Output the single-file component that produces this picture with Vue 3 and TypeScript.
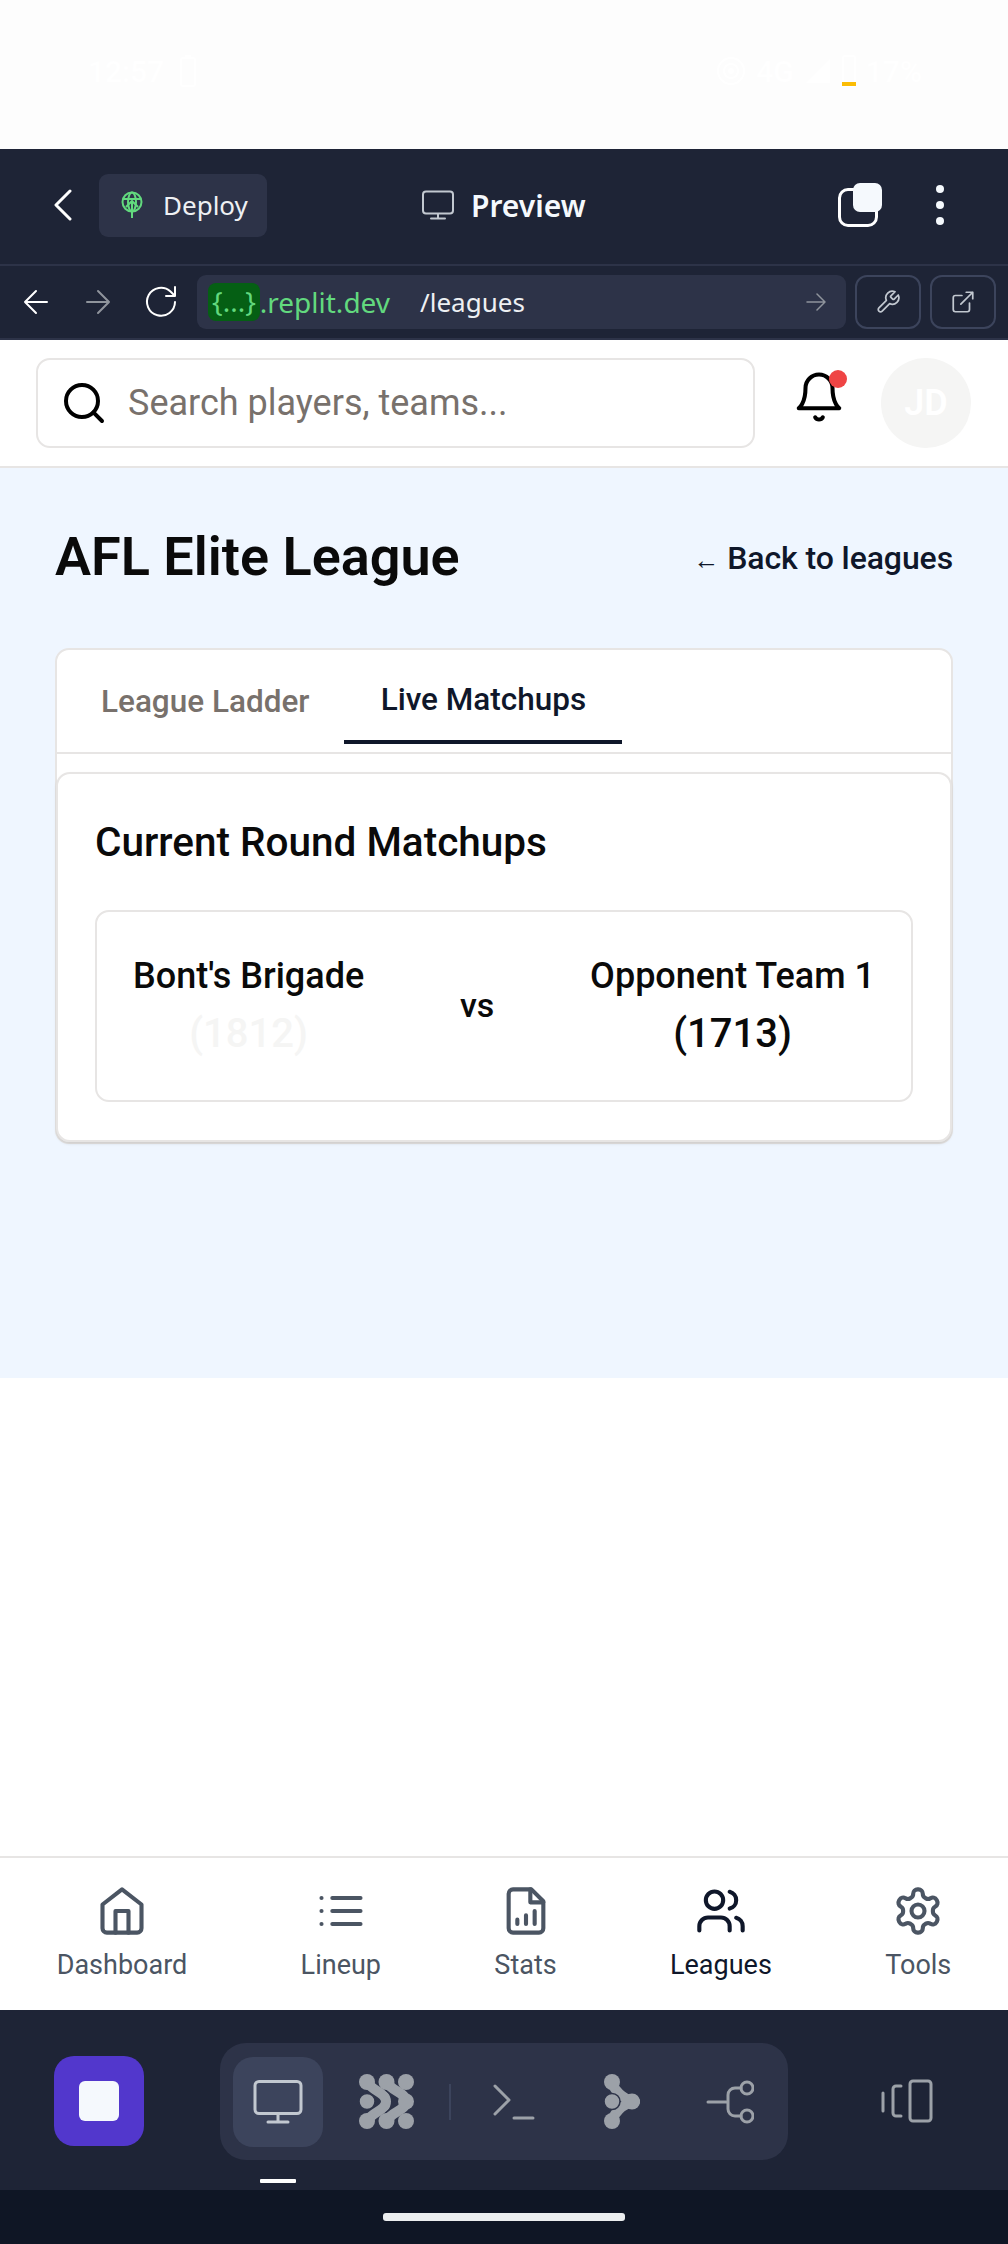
<script setup lang="ts">
interface NavItem {
  label: string;
  active?: boolean;
}

const navItems: NavItem[] = [
  { label: 'Dashboard' },
  { label: 'Lineup' },
  { label: 'Stats' },
  { label: 'Leagues', active: true },
  { label: 'Tools' },
]
</script>

<template>
  <div class="app">
    <!-- phone status bar, white on white -->
    <div class="status">
      <div class="status__group">
        <span class="status__text">12:57</span>
        <svg class="status__batt" viewBox="0 0 16 32" width="16" height="32"><rect x="1" y="3" width="14" height="28" rx="2" fill="none" stroke="#fff" stroke-width="2" /><rect x="5" y="0" width="6" height="3" fill="#fff" /></svg>
      </div>
      <div class="status__group status__group--right">
        <svg viewBox="0 0 30 30" width="30" height="30" fill="none" stroke="#fff" stroke-width="2"><circle cx="15" cy="15" r="13" /><circle cx="15" cy="15" r="7" /><circle cx="15" cy="15" r="2" fill="#fff" /></svg>
        <span class="status__text">4G</span>
        <svg viewBox="0 0 28 28" width="28" height="28"><path d="M26 2v24H2z" fill="#fff" /></svg>
        <div class="status__cell"><span class="status__level" /></div>
        <span class="status__text">17%</span>
      </div>
    </div>

    <!-- replit chrome -->
    <div class="topbar">
      <svg class="topbar__back" viewBox="0 0 20 32" width="20" height="32" fill="none" stroke="#fff" stroke-width="3" stroke-linecap="round" stroke-linejoin="round"><path d="M17 2 3 16l14 14" /></svg>
      <div class="deploy">
        <svg viewBox="0 0 22 28" width="22" height="28" fill="none" stroke="#62d97e" stroke-width="2"><circle cx="11" cy="11" r="9.500" /><ellipse cx="11" cy="11" rx="4" ry="9.500" /><path d="M2 8h18M11 27V11M5 16l6-6 6 6" /></svg>
        <span>Deploy</span>
      </div>
      <div class="preview">
        <svg viewBox="0 0 34 30" width="34" height="30" fill="none" stroke="#c2c8d0" stroke-width="2" stroke-linecap="round"><rect x="2" y="1.500" width="30" height="22" rx="3" /><path d="M17 24v4M10 28.500h14" /></svg>
        <span>Preview</span>
      </div>
      <div class="tabs-ico">
        <span class="tabs-ico__back" />
        <span class="tabs-ico__front" />
      </div>
      <div class="kebab"><i /><i /><i /></div>
    </div>

    <div class="addr">
      <svg class="addr__ico" viewBox="0 0 26 26" width="26" height="26" fill="none" stroke="#fff" stroke-width="2" stroke-linecap="round" stroke-linejoin="round"><path d="M24 13H2M13 2 2 13l11 11" /></svg>
      <svg class="addr__ico addr__ico--fwd" viewBox="0 0 26 26" width="26" height="26" fill="none" stroke="#8f949c" stroke-width="2" stroke-linecap="round" stroke-linejoin="round"><path d="M2 13h22M13 2l11 11-11 11" /></svg>
      <svg class="addr__ico addr__ico--reload" viewBox="0 0 34 34" width="34" height="34" fill="none" stroke="#fff" stroke-width="2" stroke-linecap="round" stroke-linejoin="round"><path d="M31 17a14 14 0 1 1-4.500-10.500L31 11M31 2v9h-9" /></svg>
      <div class="url">
        <span class="url__sub">{...}</span><span class="url__host">.replit.dev</span>
        <span class="url__path">/leagues</span>
        <svg class="url__go" viewBox="0 0 20 18" width="20" height="18" fill="none" stroke="#8f949c" stroke-width="1.500" stroke-linecap="round" stroke-linejoin="round"><path d="M1 9h18M11 1l8 8-8 8" /></svg>
      </div>
      <div class="tool">
        <svg viewBox="0 0 24 24" width="26" height="26" fill="none" stroke="#c2c8d0" stroke-width="1.600" stroke-linecap="round" stroke-linejoin="round"><path d="M14.700 6.300a1 1 0 0 0 0 1.400l1.600 1.600a1 1 0 0 0 1.400 0l3.770-3.770a6 6 0 0 1-7.940 7.940l-6.910 6.910a2.120 2.120 0 0 1-3-3l6.910-6.910a6 6 0 0 1 7.940-7.940l-3.760 3.760z" /></svg>
      </div>
      <div class="tool">
        <svg viewBox="0 0 24 24" width="26" height="26" fill="none" stroke="#c2c8d0" stroke-width="1.600" stroke-linecap="round" stroke-linejoin="round"><path d="M18 13v6a2 2 0 0 1-2 2H5a2 2 0 0 1-2-2V8a2 2 0 0 1 2-2h6M15 3h6v6M10 14 21 3" /></svg>
      </div>
    </div>

    <!-- the app being previewed -->
    <header class="header">
      <div class="search">
        <svg viewBox="0 0 24 24" width="48" height="48" fill="none" stroke="#000" stroke-width="2" stroke-linecap="round" stroke-linejoin="round"><circle cx="11" cy="11" r="8" /><path d="m21 21-4.300-4.300" /></svg>
        <span class="search__text">Search players, teams...</span>
      </div>
      <div class="bell">
        <svg viewBox="0 0 24 24" width="54" height="54" fill="none" stroke="#000" stroke-width="1.800" stroke-linecap="round" stroke-linejoin="round"><path d="M6 8a6 6 0 0 1 12 0c0 7 3 9 3 9H3s3-2 3-9" /><path d="M10.300 21a1.940 1.940 0 0 0 3.400 0" /></svg>
        <span class="bell__dot" />
      </div>
      <div class="avatar">JD</div>
    </header>

    <main class="main">
      <section class="league">
        <div class="league__head">
          <h1 class="league__title">AFL Elite League</h1>
          <a class="league__back"><span class="league__arrow">←</span> Back to leagues</a>
        </div>

        <div class="panel">
          <div class="tabs">
            <div class="tab">League Ladder</div>
            <div class="tab tab--active">Live Matchups</div>
          </div>
          <div class="round">
            <h2 class="round__title">Current Round Matchups</h2>
            <div class="match">
              <div class="team">
                <div class="team__name">Bont's Brigade</div>
                <div class="team__score team__score--faint">(1812)</div>
              </div>
              <div class="match__vs">vs</div>
              <div class="team">
                <div class="team__name">Opponent Team 1</div>
                <div class="team__score">(1713)</div>
              </div>
            </div>
          </div>
        </div>
      </section>
    </main>

    <nav class="nav">
      <div v-for="(item, i) in navItems" :key="item.label" :class="['nav__item', { 'nav__item--active': item.active }]">
        <svg viewBox="0 0 24 24" width="52" height="52" fill="none" stroke="currentColor" stroke-width="1.900" stroke-linecap="round" stroke-linejoin="round">
          <template v-if="i === 0">
            <path d="m3 9 9-7 9 7v11a2 2 0 0 1-2 2H5a2 2 0 0 1-2-2z" /><path d="M9 22V12h6v10" />
          </template>
          <template v-else-if="i === 1">
            <path d="M8 6h13M8 12h13M8 18h13M3 6h.01M3 12h.01M3 18h.01" />
          </template>
          <template v-else-if="i === 2">
            <path d="M14.500 2H6a2 2 0 0 0-2 2v16a2 2 0 0 0 2 2h12a2 2 0 0 0 2-2V7.500z" /><path d="M14 2v6h6M12 18v-4M8 18v-2M16 18v-6" />
          </template>
          <template v-else-if="i === 3">
            <path d="M16 21v-2a4 4 0 0 0-4-4H6a4 4 0 0 0-4 4v2" /><circle cx="9" cy="7" r="4" /><path d="M22 21v-2a4 4 0 0 0-3-3.870M16 3.130a4 4 0 0 1 0 7.750" />
          </template>
          <template v-else>
            <path d="M12.220 2h-.44a2 2 0 0 0-2 2v.18a2 2 0 0 1-1 1.730l-.43.25a2 2 0 0 1-2 0l-.15-.08a2 2 0 0 0-2.730.73l-.22.38a2 2 0 0 0 .73 2.730l.15.1a2 2 0 0 1 1 1.720v.51a2 2 0 0 1-1 1.740l-.15.09a2 2 0 0 0-.73 2.730l.22.38a2 2 0 0 0 2.730.73l.15-.08a2 2 0 0 1 2 0l.43.25a2 2 0 0 1 1 1.730V20a2 2 0 0 0 2 2h.44a2 2 0 0 0 2-2v-.18a2 2 0 0 1 1-1.730l.43-.25a2 2 0 0 1 2 0l.15.08a2 2 0 0 0 2.730-.73l.22-.39a2 2 0 0 0-.73-2.730l-.15-.08a2 2 0 0 1-1-1.740v-.5a2 2 0 0 1 1-1.740l.15-.09a2 2 0 0 0 .73-2.730l-.22-.38a2 2 0 0 0-2.730-.73l-.15.08a2 2 0 0 1-2 0l-.43-.25a2 2 0 0 1-1-1.730V4a2 2 0 0 0-2-2z" /><circle cx="12" cy="12" r="3" />
          </template>
        </svg>
        <span class="nav__label">{{ item.label }}</span>
      </div>
    </nav>

    <!-- replit bottom toolbar -->
    <div class="dock">
      <div class="stop"><span class="stop__square" /></div>
      <div class="pill">
        <div class="slot slot--active">
          <svg viewBox="0 0 50 44" width="50" height="44" fill="none" stroke="#c2c8d0" stroke-width="3" stroke-linecap="round"><rect x="2" y="1.500" width="46" height="32" rx="4" /><path d="M25 34v8M15 42h20" /></svg>
          <span class="slot__mark" />
        </div>
        <div class="slot">
          <svg viewBox="0 0 55 55" width="55" height="55" fill="#9ca1a8" stroke="none">
            <path d="M8 8C14 18 27 18 27 27.500S14 37 8 47" fill="none" stroke="#9ca1a8" stroke-width="10" stroke-linecap="round" />
            <path d="M27.500 8C33 18 47 18 47 27.500S33 37 27.500 47" fill="none" stroke="#2d3348" stroke-width="13" />
            <path d="M27.500 8C33 18 47 18 47 27.500S33 37 27.500 47" fill="none" stroke="#9ca1a8" stroke-width="10" stroke-linecap="round" />
            <circle cx="8" cy="8" r="8" /><circle cx="27.500" cy="8" r="8" /><circle cx="47" cy="8" r="8" />
            <circle cx="47" cy="27.500" r="8" />
            <circle cx="8" cy="47" r="8" /><circle cx="27.500" cy="47" r="8" /><circle cx="47" cy="47" r="8" />
            <circle cx="8" cy="27.500" r="8" stroke="#2d3348" stroke-width="1.500" />
          </svg>
        </div>
        <span class="pill__sep" />
        <div class="slot">
          <svg viewBox="0 0 42 36" width="42" height="36" fill="none" stroke="#9ca1a8" stroke-width="3" stroke-linecap="round" stroke-linejoin="round"><path d="M2 2l14 14L2 30M21 34h19" /></svg>
        </div>
        <div class="slot">
          <svg viewBox="0 0 36 55" width="36" height="55" fill="#9ca1a8" stroke="none">
            <path d="M8 8C11 18 18 23 28 27.500C18 32 11 37 8 47L20 27.500z" />
            <path d="M8 8C11 18 18 23 28 27.500C18 32 11 37 8 47" fill="none" stroke="#9ca1a8" stroke-width="10" stroke-linecap="round" />
            <circle cx="8" cy="8" r="8" /><circle cx="8" cy="47" r="8" /><circle cx="28" cy="27.500" r="8" />
            <circle cx="8" cy="27.500" r="8" stroke="#2d3348" stroke-width="1.500" />
          </svg>
        </div>
        <div class="slot">
          <svg viewBox="0 0 48 44" width="48" height="44" fill="none" stroke="#9ca1a8" stroke-width="3" stroke-linecap="round" stroke-linejoin="round"><circle cx="41" cy="8" r="6" /><circle cx="41" cy="36" r="6" /><path d="M2 22h18M35 8h-6a7 7 0 0 0-7 7v14a7 7 0 0 0 7 7h6" /></svg>
        </div>
      </div>
      <div class="dock__side">
        <svg viewBox="0 0 52 44" width="52" height="44" fill="none" stroke="#9ca1a8" stroke-width="3" stroke-linecap="round" stroke-linejoin="round"><path d="M2 14v18M20 7h-5a3 3 0 0 0-3 3v24a3 3 0 0 0 3 3h5" /><rect x="29" y="2" width="21" height="40" rx="3" /></svg>
      </div>
    </div>

    <div class="gesture"><span class="gesture__bar" /></div>
  </div>
</template>

<style scoped>
.app {
  width: 1008px;
  height: 2244px;
  display: flex;
  flex-direction: column;
  background: #fff;
  font-family: 'Roboto', 'Liberation Sans', sans-serif;
  overflow: hidden;
}

/* status bar */
.status {
  height: 149px;
  box-sizing: border-box;
  padding: 55px 86px 0 88px;
  background: #fdfdfd;
  display: flex;
  justify-content: space-between;
}

.status__group {
  display: flex;
  align-items: center;
  gap: 16px;
  height: 32px;
}

.status__group--right {
  gap: 10px;
}

.status__text {
  font-size: 30px;
  font-weight: 500;
  color: #fff;
}

.status__cell {
  position: relative;
  width: 14px;
  height: 32px;
  box-sizing: border-box;
  border: 2px solid #fff;
  border-radius: 3px;
}

.status__level {
  position: absolute;
  left: -2px;
  right: -2px;
  bottom: -1px;
  height: 4px;
  background: #fbbc05;
}

/* top chrome */
.topbar {
  height: 117px;
  box-sizing: border-box;
  padding: 0 0 2px 53px;
  background: #1e2436;
  border-bottom: 2px solid #2d3348;
  display: flex;
  align-items: center;
}

.deploy {
  width: 168px;
  height: 63px;
  box-sizing: border-box;
  margin: -1px 0 0 26px;
  padding-left: 22px;
  background: #2d3348;
  border-radius: 9px;
  display: flex;
  align-items: center;
  gap: 20px;
  font-family: 'Noto Sans', sans-serif;
  font-size: 26px;
  color: #eef0f3;
}

.preview {
  margin: -1px 0 0 154px;
  display: flex;
  align-items: center;
  gap: 16px;
  font-family: 'Noto Sans', sans-serif;
  font-size: 30px;
  font-weight: 600;
  color: #f5f9fd;
}

.topbar__back {
  margin-top: -1px;
}

.tabs-ico {
  position: relative;
  width: 44px;
  height: 44px;
  margin: -1px 0 0 252px;
}

.tabs-ico__back {
  position: absolute;
  left: 0;
  bottom: 0;
  width: 40px;
  height: 39px;
  box-sizing: border-box;
  border: 3px solid #fff;
  border-radius: 10px;
}

.tabs-ico__front {
  position: absolute;
  right: 0;
  top: 0;
  width: 29px;
  height: 29px;
  background: #f5f9fd;
  border-radius: 7px;
}

.kebab {
  margin: -1px 0 0 54px;
  display: flex;
  flex-direction: column;
  gap: 8px;
}

.kebab i {
  display: block;
  width: 8px;
  height: 8px;
  border-radius: 50%;
  background: #f5f9fd;
}

/* address row */
.addr {
  height: 74px;
  box-sizing: border-box;
  padding: 9px 9px 0 23px;
  background: #1e2436;
  border-bottom: 2px solid #2d3348;
  display: flex;
  align-items: flex-start;
}

.addr__ico {
  margin-top: 14px;
}

.addr__ico--fwd {
  margin-left: 36px;
}

.addr__ico--reload {
  margin: 10px 0 0 33px;
}

.url {
  width: 649px;
  height: 54px;
  box-sizing: border-box;
  margin-left: 19px;
  padding: 0 20px 0 11px;
  background: #2d3348;
  border-radius: 9px;
  display: flex;
  align-items: center;
  font-family: 'Noto Sans', sans-serif;
  font-size: 28px;
}

.url__sub {
  height: 38px;
  line-height: 36px;
  padding: 0 4px;
  background: #055f14;
  border-radius: 8px;
  color: #62d97e;
}

.url__host {
  color: #62d97e;
}

.url__path {
  margin-left: 30px;
  font-size: 26px;
  color: #eef0f3;
}

.url__go {
  margin-left: auto;
}

.tool {
  width: 66px;
  height: 54px;
  box-sizing: border-box;
  margin-left: 9px;
  border: 2px solid #3c445c;
  border-radius: 12px;
  display: flex;
  align-items: center;
  justify-content: center;
}

/* previewed app header */
.header {
  height: 128px;
  box-sizing: border-box;
  padding: 18px 36px 0 36px;
  border-bottom: 2px solid #e7e5e4;
  display: flex;
  align-items: flex-start;
}

.search {
  width: 719px;
  height: 90px;
  box-sizing: border-box;
  padding-left: 22px;
  border: 2px solid #e7e5e4;
  border-radius: 14px;
  display: flex;
  align-items: center;
  gap: 20px;
}

.search__text {
  font-size: 36px;
  color: #78716c;
}

.bell {
  position: relative;
  width: 54px;
  height: 54px;
  margin: 12px 0 0 37px;
}

.bell__dot {
  position: absolute;
  top: 0;
  right: -1px;
  width: 18px;
  height: 18px;
  border-radius: 50%;
  background: #ef4444;
}

.avatar {
  width: 90px;
  height: 90px;
  margin-left: 35px;
  border-radius: 50%;
  background: #f5f5f4;
  color: #fff;
  font-size: 36px;
  font-weight: 600;
  display: flex;
  align-items: center;
  justify-content: center;
}

/* main */
.main {
  flex: 1;
}

.league {
  height: 910px;
  box-sizing: border-box;
  padding: 46px 55px 0;
  background: #eff6ff;
}

.league__head {
  height: 84px;
  margin-bottom: 50px;
  display: flex;
  align-items: center;
  justify-content: space-between;
}

.league__title {
  margin: 0;
  font-size: 54px;
  font-weight: 600;
  color: #0a0a0a;
}

.league__back {
  padding-top: 3px;
  font-size: 32px;
  font-weight: 500;
  letter-spacing: -0.1px;
  color: #0f172a;
}

.league__arrow {
  font-size: 26px;
}

.panel {
  border: 2px solid #e7e5e4;
  border-radius: 14px;
  background: #fff;
}

.tabs {
  height: 104px;
  box-sizing: border-box;
  border-bottom: 2px solid #e7e5e4;
  display: flex;
}

.tab {
  box-sizing: border-box;
  padding: 33px 35px 0 44px;
  font-size: 31.500px;
  font-weight: 500;
  color: #78716c;
}

.tab--active {
  width: 278px;
  height: 94px;
  padding: 31px 0 0;
  text-align: center;
  color: #0f172a;
  border-bottom: 4px solid #0f172a;
}

.round {
  margin: 18px -1px 0;
  padding: 44px 37px 38px;
  border: 2px solid #e7e5e4;
  border-radius: 14px;
  background: #fff;
  box-shadow: 0 2px 3px rgba(0, 0, 0, 0.1);
}

.round__title {
  margin: 0 0 44px;
  font-size: 40.500px;
  font-weight: 500;
  color: #0a0a0a;
}

.match {
  height: 192px;
  box-sizing: border-box;
  padding: 0 36px 3px;
  border: 2px solid #e7e5e4;
  border-radius: 14px;
  display: flex;
  align-items: center;
  justify-content: space-between;
  color: #0a0a0a;
}

.team {
  text-align: center;
  font-size: 36px;
  font-weight: 500;
}

.team__name {
  line-height: 58px;
}

.team__score {
  font-size: 40px;
  line-height: 58px;
}

.team__score--faint {
  color: #f5f5f4;
}

.match__vs {
  font-size: 34px;
  font-weight: 500;
}

/* bottom nav */
.nav {
  height: 154px;
  box-sizing: border-box;
  padding-top: 27px;
  border-top: 2px solid #e7e5e4;
  display: flex;
  justify-content: space-around;
  align-items: flex-start;
  border-radius: 0 0 12px 12px;
  position: relative;
}

.nav__item {
  display: flex;
  flex-direction: column;
  align-items: center;
  gap: 12px;
  color: #4b5563;
}

.nav__item--active {
  color: #0f172a;
}

.nav__label {
  font-size: 27px;
}

/* dock */
.dock {
  height: 180px;
  box-sizing: border-box;
  padding: 33px 0 0 54px;
  background: #1e2436;
  display: flex;
  align-items: flex-start;
}

.stop {
  width: 90px;
  height: 90px;
  margin-top: 13px;
  background: #5237cc;
  border-radius: 20px;
  display: flex;
  align-items: center;
  justify-content: center;
}

.stop__square {
  width: 40px;
  height: 40px;
  background: #f5f9fd;
  border-radius: 6px;
}

.pill {
  height: 117px;
  box-sizing: border-box;
  margin-left: 76px;
  padding: 0 13px;
  background: #2d3348;
  border-radius: 26px;
  display: flex;
  align-items: center;
  gap: 18px;
}

.pill__sep {
  width: 2px;
  height: 36px;
  background: #3c445c;
}

.slot {
  position: relative;
  width: 90px;
  height: 90px;
  border-radius: 20px;
  display: flex;
  align-items: center;
  justify-content: center;
}

.slot--active {
  background: #3c445c;
}

.slot__mark {
  position: absolute;
  left: 27px;
  bottom: -36px;
  width: 36px;
  height: 4px;
  border-radius: 1px;
  background: #fff;
}

.dock__side {
  margin: 36px 0 0 93px;
}

.gesture {
  height: 54px;
  background: #0f1625;
  display: flex;
  justify-content: center;
  padding-top: 23px;
  box-sizing: border-box;
}

.gesture__bar {
  width: 242px;
  height: 8px;
  border-radius: 3px;
  background: #eceef0;
}
</style>
